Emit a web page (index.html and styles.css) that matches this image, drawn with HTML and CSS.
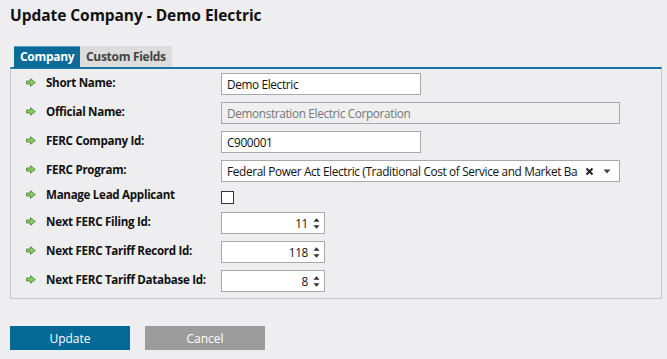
FILE: index.html
```html
<!DOCTYPE html>
<html>
<head>
<meta charset="utf-8">
<link rel="stylesheet" href="styles.css">
</head>
<body>
<h1 class="title">Update Company - Demo Electric</h1>
<div class="tabs">
  <div class="tab active">Company</div>
  <div class="tab">Custom Fields</div>
</div>
<div class="panel">
  <div class="row">
    <div class="label"><svg class="arrow" viewBox="0 0 10 9"><path d="M0.5 3H4.5V0.7L9.3 4.5L4.5 8.3V6H0.5Z"/></svg>Short Name:</div>
    <div class="field"><div class="input short">Demo Electric</div></div>
  </div>
  <div class="row">
    <div class="label"><svg class="arrow" viewBox="0 0 10 9"><path d="M0.5 3H4.5V0.7L9.3 4.5L4.5 8.3V6H0.5Z"/></svg>Official Name:</div>
    <div class="field"><div class="input long disabled">Demonstration Electric Corporation</div></div>
  </div>
  <div class="row">
    <div class="label"><svg class="arrow" viewBox="0 0 10 9"><path d="M0.5 3H4.5V0.7L9.3 4.5L4.5 8.3V6H0.5Z"/></svg>FERC Company Id:</div>
    <div class="field"><div class="input short">C900001</div></div>
  </div>
  <div class="row">
    <div class="label"><svg class="arrow" viewBox="0 0 10 9"><path d="M0.5 3H4.5V0.7L9.3 4.5L4.5 8.3V6H0.5Z"/></svg>FERC Program:</div>
    <div class="field">
      <div class="input long select">
        <span class="seltext">Federal Power Act Electric (Traditional Cost of Service and Market Based Rates)</span>
        <svg class="clear" viewBox="0 0 9 9"><path d="M1.5 1.5L7.5 7.5M7.5 1.5L1.5 7.5"/></svg>
        <svg class="caret" viewBox="0 0 8 5"><path d="M0.5 0.5H7.5L4 4.5Z"/></svg>
      </div>
    </div>
  </div>
  <div class="row check-row">
    <div class="label"><svg class="arrow" viewBox="0 0 10 9"><path d="M0.5 3H4.5V0.7L9.3 4.5L4.5 8.3V6H0.5Z"/></svg>Manage Lead Applicant</div>
    <div class="field"><div class="checkbox"></div></div>
  </div>
  <div class="row">
    <div class="label"><svg class="arrow" viewBox="0 0 10 9"><path d="M0.5 3H4.5V0.7L9.3 4.5L4.5 8.3V6H0.5Z"/></svg>Next FERC Filing Id:</div>
    <div class="field"><div class="input spin"><span class="num">11</span><svg class="spinner" viewBox="0 0 8 14"><path d="M4 1L7.5 5H0.5Z M0.5 9H7.5L4 13Z"/></svg></div></div>
  </div>
  <div class="row">
    <div class="label"><svg class="arrow" viewBox="0 0 10 9"><path d="M0.5 3H4.5V0.7L9.3 4.5L4.5 8.3V6H0.5Z"/></svg>Next FERC Tariff Record Id:</div>
    <div class="field"><div class="input spin"><span class="num">118</span><svg class="spinner" viewBox="0 0 8 14"><path d="M4 1L7.5 5H0.5Z M0.5 9H7.5L4 13Z"/></svg></div></div>
  </div>
  <div class="row">
    <div class="label"><svg class="arrow" viewBox="0 0 10 9"><path d="M0.5 3H4.5V0.7L9.3 4.5L4.5 8.3V6H0.5Z"/></svg>Next FERC Tariff Database Id:</div>
    <div class="field"><div class="input spin"><span class="num">8</span><svg class="spinner" viewBox="0 0 8 14"><path d="M4 1L7.5 5H0.5Z M0.5 9H7.5L4 13Z"/></svg></div></div>
  </div>
</div>
<div class="actions">
  <button class="btn primary">Update</button>
  <button class="btn secondary">Cancel</button>
</div>
</body>
</html>
```
FILE: styles.css
```css
html, body {
  margin: 0;
  padding: 0;
  background: #eeeef0;
}
body {
  padding: 0 10px;
  font-family: "Open Sans", "Noto Sans", sans-serif;
  font-size: 12px;
  color: #111;
}
.title {
  margin: 0;
  padding-top: 4px;
  height: 42px;
  font-size: 15.5px;
  font-weight: bold;
  letter-spacing: -0.05px;
  color: #111;
  line-height: 22px;
}
.tabs {
  display: flex;
  padding-left: 4px;
  height: 21px;
}
.tab {
  padding: 0 6px;
  line-height: 22px;
  font-weight: bold;
  font-size: 12px;
  letter-spacing: -0.3px;
  background: #dcdcdc;
  color: #444;
}
.tab.active {
  background: #0b6b98;
  color: #fff;
  width: 54px;
  box-shadow: inset 0 1px 0 #5a9ec0;
}
.panel {
  border-top: 2px solid #1574a3;
  border-left: 1px solid #c8c8c8;
  border-right: 1px solid #c8c8c8;
  border-bottom: 1px solid #c8c8c8;
  width: 652px;
  padding: 4px 0 6px 15px;
  box-sizing: border-box;
  display: flex;
  flex-direction: column;
  gap: 7px;
}
.row {
  display: flex;
  align-items: center;
  height: 22px;
}
.row.check-row {
  height: 16px;
}
.label {
  width: 195px;
  display: flex;
  align-items: center;
  font-weight: bold;
  font-size: 11.6px;
  letter-spacing: -0.3px;
  color: #111;
  margin-top: -3px;
}
.check-row .label {
  margin-top: -6px;
}
.arrow {
  width: 10px;
  height: 9px;
  margin-right: 10px;
  fill: #8bc866;
  stroke: #4f8d33;
  stroke-width: 0.9;
}
.field {
  display: flex;
  align-items: center;
}
.input {
  box-sizing: border-box;
  height: 22px;
  border: 1px solid #a9a9a9;
  background: #fff;
  padding: 0 5px;
  line-height: 20px;
  font-size: 11.8px;
  letter-spacing: -0.35px;
  color: #111;
  white-space: nowrap;
  overflow: hidden;
}
.input.short {
  width: 200px;
}
.input.long {
  width: 399px;
}
.input.disabled {
  background: #efefef;
  color: #777;
}
.input.select {
  display: flex;
  align-items: center;
  padding-right: 8px;
}
.seltext {
  flex: 1;
  overflow: hidden;
  white-space: nowrap;
}
.clear {
  width: 9px;
  height: 9px;
  margin-left: 7px;
  stroke: #222;
  stroke-width: 2;
}
.caret {
  width: 8px;
  height: 5px;
  margin-left: 9px;
  fill: #444;
}
.checkbox {
  box-sizing: border-box;
  width: 13px;
  height: 13px;
  border: 1px solid #333;
  background: #fff;
}
.input.spin {
  width: 104px;
  display: flex;
  align-items: center;
  justify-content: flex-end;
  padding-right: 4px;
}
.num {
  margin-right: 5px;
}
.spinner {
  width: 7px;
  height: 13px;
  fill: #333;
}
.actions {
  display: flex;
  gap: 15px;
  margin-top: 27px;
}
.btn {
  width: 120px;
  height: 24px;
  border: none;
  padding: 0;
  font-family: "Open Sans", "Noto Sans", sans-serif;
  font-size: 12px;
  color: #fff;
}
.btn.primary {
  background: #036a98;
}
.btn.secondary {
  background: #9c9c9c;
}
```
